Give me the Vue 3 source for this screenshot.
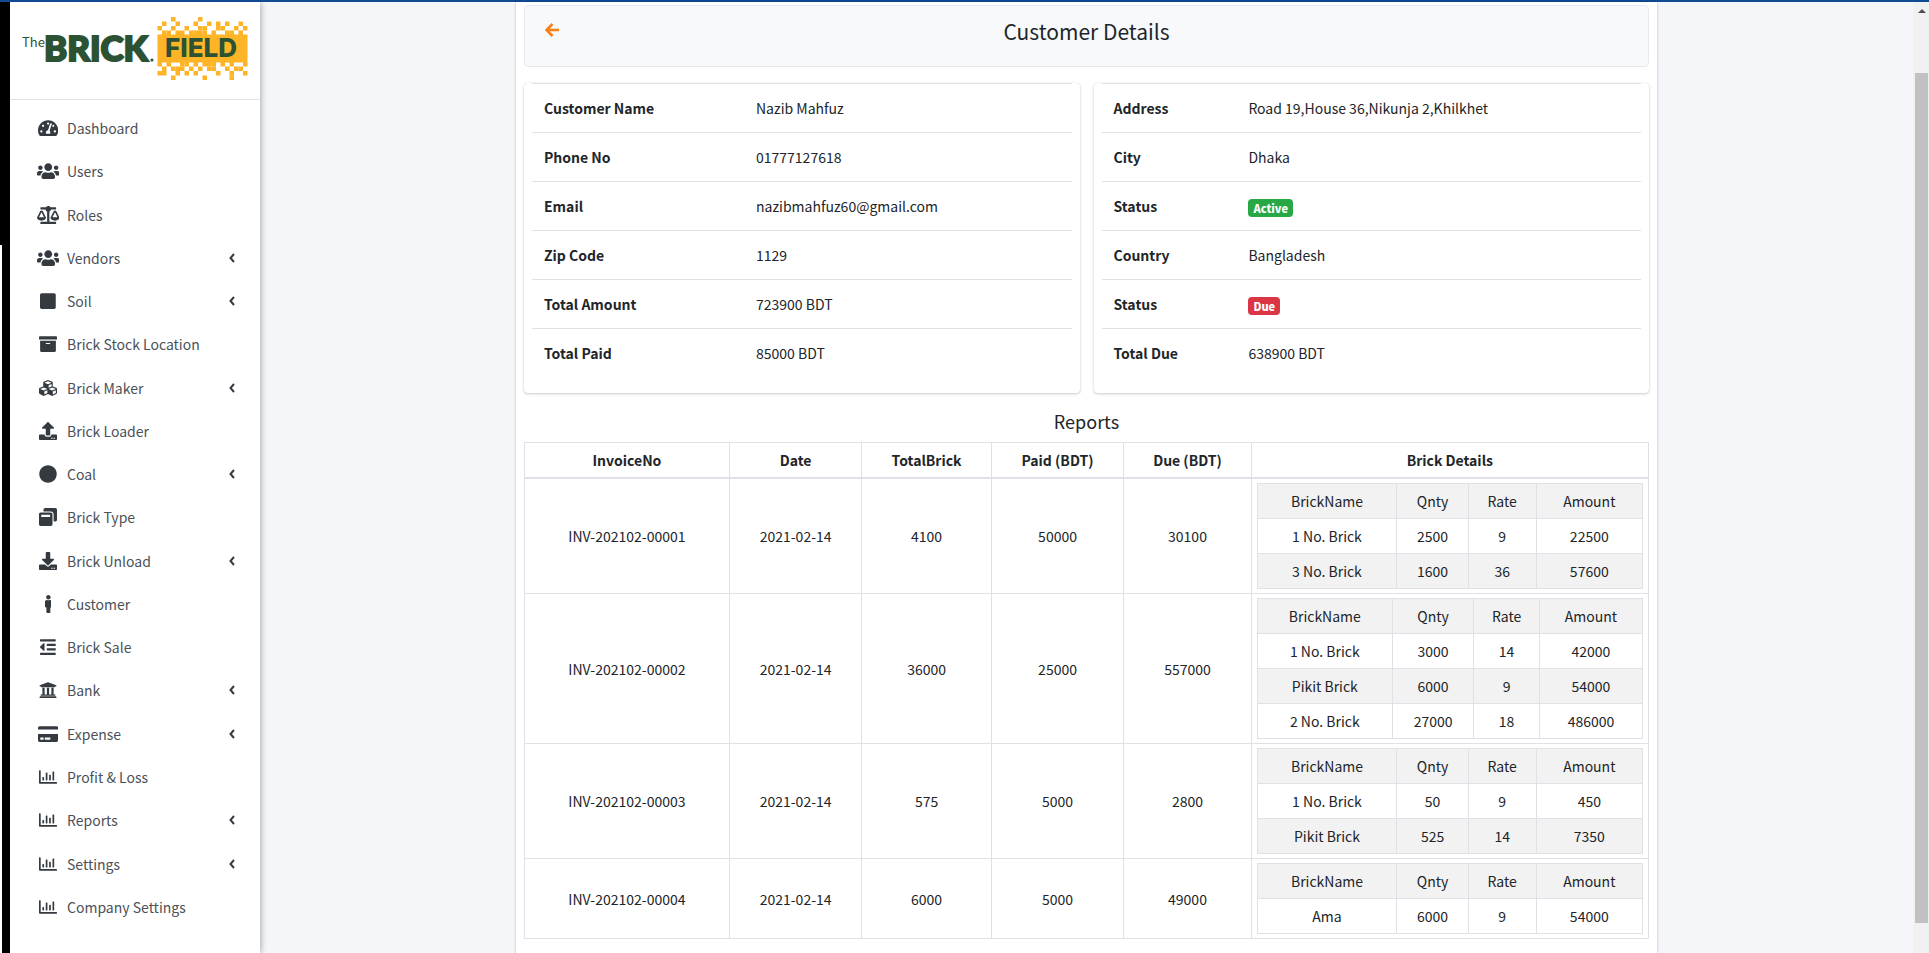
<script setup>
const icons = {
  gauge: { w: 576, d: 'M288 32C128.94 32 0 160.94 0 320c0 52.8 14.25 102.26 39.06 144.8 5.61 9.62 16.3 15.2 27.44 15.2h443c11.14 0 21.83-5.58 27.44-15.2C561.75 422.26 576 372.8 576 320c0-159.06-128.94-288-288-288zm0 64c14.71 0 26.58 10.13 30.32 23.65-1.11 2.26-2.64 4.23-3.45 6.67l-9.22 27.67c-5.13 3.49-10.97 6.01-17.64 6.01-17.67 0-32-14.33-32-32S270.33 96 288 96zM96 384c-17.67 0-32-14.33-32-32s14.33-32 32-32 32 14.33 32 32-14.33 32-32 32zm48-160c-17.67 0-32-14.33-32-32s14.33-32 32-32 32 14.33 32 32-14.33 32-32 32zm246.77-72.41l-61.33 184C343.13 347.33 352 364.54 352 384c0 11.72-3.38 22.55-8.88 32H232.88c-5.5-9.45-8.88-20.28-8.88-32 0-33.94 26.5-61.43 59.9-63.59l61.34-184.01c4.17-12.56 17.73-19.45 30.36-15.17 12.57 4.19 19.35 17.79 15.17 30.36zm14.66 57.2l15.52-46.55c3.47-1.29 7.13-2.23 11.05-2.23 17.67 0 32 14.33 32 32s-14.33 32-32 32c-11.38-.01-20.89-6.28-26.57-15.22zM480 384c-17.67 0-32-14.33-32-32s14.33-32 32-32 32 14.33 32 32-14.33 32-32 32z' },
  users: { w: 640, d: 'M96 224c35.3 0 64-28.7 64-64s-28.7-64-64-64-64 28.700-64 64 28.700 64 64 64zm448 0c35.300 0 64-28.700 64-64s-28.700-64-64-64-64 28.700-64 64 28.700 64 64 64zm32 32h-64c-17.600 0-33.500 7.100-45.100 18.600 40.300 22.100 68.900 62 75.100 109.400h66c17.700 0 32-14.300 32-32v-32c0-35.300-28.700-64-64-64zm-256 0c61.900 0 112-50.100 112-112S381.900 32 320 32 208 82.100 208 144s50.100 112 112 112zm76.800 32h-8.300c-20.800 10-43.900 16-68.500 16s-47.600-6-68.500-16h-8.300C179.600 288 128 339.600 128 403.200V432c0 26.500 21.500 48 48 48h288c26.500 0 48-21.500 48-48v-28.800c0-63.600-51.600-115.200-115.200-115.200zm-223.700-13.400C161.500 263.100 145.600 256 128 256H64c-35.300 0-64 28.700-64 64v32c0 17.700 14.300 32 32 32h65.900c6.300-47.400 34.900-87.300 75.200-109.400z' },
  scale: { w: 640, d: 'M256 336h-.02c0-16.180 1.340-8.730-85.050-181.510-17.650-35.290-68.190-35.360-85.870 0C-2.060 328.750.020 320.330.020 336H0c0 44.180 57.310 80 128 80s128-35.820 128-80zM128 176l72 144H56l72-144zm511.980 160c0-16.180 1.340-8.730-85.050-181.510-17.650-35.290-68.190-35.360-85.870 0-87.120 174.260-85.040 165.840-85.040 181.510H384c0 44.180 57.310 80 128 80s128-35.820 128-80h-.02zM440 320l72-144 72 144H440zm88 128H352V153.250c23.510-10.290 41.160-31.480 46.390-57.250H528c8.840 0 16-7.160 16-16V48c0-8.840-7.160-16-16-16H383.640C369.040 12.680 346.090 0 320 0s-49.040 12.680-63.640 32H112c-8.840 0-16 7.160-16 16v32c0 8.840 7.160 16 16 16h129.610c5.230 25.760 22.870 46.960 46.390 57.250V448H112c-8.840 0-16 7.160-16 16v32c0 8.840 7.160 16 16 16h416c8.840 0 16-7.160 16-16v-32c0-8.840-7.160-16-16-16z' },
  square: { w: 448, d: 'M400 32H48C21.500 32 0 53.500 0 80v352c0 26.500 21.500 48 48 48h352c26.500 0 48-21.500 48-48V80c0-26.500-21.500-48-48-48z' },
  archive: { w: 512, d: 'M32 448c0 17.700 14.300 32 32 32h384c17.700 0 32-14.300 32-32V160H32v288zm160-212c0-6.600 5.400-12 12-12h104c6.600 0 12 5.400 12 12v8c0 6.600-5.400 12-12 12H204c-6.600 0-12-5.400-12-12v-8zM480 32H32C14.300 32 0 46.300 0 64v48c0 8.800 7.200 16 16 16h480c8.800 0 16-7.200 16-16V64c0-17.700-14.300-32-32-32z' },
  cubes: { w: 512, d: 'M488.600 250.200L392 214V105.500c0-15-9.300-28.400-23.400-33.700l-100-37.500c-8.100-3.100-17.100-3.100-25.300 0l-100 37.500c-14.100 5.300-23.400 18.700-23.400 33.700V214l-96.600 36.200C9.300 255.500 0 268.900 0 283.900V394c0 13.600 7.700 26.100 19.900 32.200l100 50c10.100 5.100 22.100 5.100 32.200 0l103.900-52 103.900 52c10.100 5.100 22.100 5.100 32.200 0l100-50c12.200-6.100 19.900-18.600 19.900-32.200V283.900c0-15-9.300-28.400-23.400-33.700zM358 214.800l-85 31.900v-68.200l85-37v73.300zM154 104.100l102-38.200 102 38.200v.6l-102 41.400-102-41.400v-.6zm84 291.100l-85 42.500v-79.100l85-38.800v75.400zm0-112l-102 41.400-102-41.400v-.6l102-38.200 102 38.200v.6zm240 112l-85 42.500v-79.100l85-38.800v75.400zm0-112l-102 41.400-102-41.400v-.6l102-38.200 102 38.200v.6z' },
  upload: { w: 512, d: 'M296 384h-80c-13.300 0-24-10.700-24-24V192h-87.700c-17.800 0-26.700-21.500-14.100-34.100L242.300 5.700c7.500-7.500 19.800-7.500 27.300 0l152.200 152.200c12.600 12.600 3.700 34.100-14.100 34.100H320v168c0 13.300-10.700 24-24 24zm216-8v112c0 13.300-10.700 24-24 24H24c-13.300 0-24-10.700-24-24V376c0-13.300 10.700-24 24-24h136v8c0 30.900 25.100 56 56 56h80c30.900 0 56-25.100 56-56v-8h136c13.300 0 24 10.700 24 24zm-124 88c0-11-9-20-20-20s-20 9-20 20 9 20 20 20 20-9 20-20zm64 0c0-11-9-20-20-20s-20 9-20 20 9 20 20 20 20-9 20-20z' },
  circle: { w: 512, d: 'M256 8C119 8 8 119 8 256s111 248 248 248 248-111 248-248S393 8 256 8z' },
  windows: { w: 512, d: 'M512 48v288c0 26.500-21.500 48-48 48h-48V176c0-44.100-35.900-80-80-80H128V48c0-26.500 21.500-48 48-48h288c26.500 0 48 21.500 48 48zM384 176v288c0 26.500-21.500 48-48 48H48c-26.500 0-48-21.500-48-48V176c0-26.500 21.500-48 48-48h288c26.500 0 48 21.500 48 48zm-68 28c0-6.600-5.400-12-12-12H76c-6.600 0-12 5.400-12 12v52h252v-52z' },
  download: { w: 512, d: 'M216 0h80c13.300 0 24 10.700 24 24v168h87.700c17.800 0 26.700 21.500 14.100 34.100L269.700 378.300c-7.500 7.500-19.800 7.500-27.300 0L90.100 226.100c-12.600-12.600-3.700-34.100 14.100-34.100H192V24c0-13.300 10.700-24 24-24zm296 376v112c0 13.300-10.700 24-24 24H24c-13.300 0-24-10.700-24-24V376c0-13.300 10.700-24 24-24h146.700l49 49c20.100 20.100 52.500 20.100 72.600 0l49-49H488c13.300 0 24 10.700 24 24zm-124 88c0-11-9-20-20-20s-20 9-20 20 9 20 20 20 20-9 20-20zm64 0c0-11-9-20-20-20s-20 9-20 20 9 20 20 20 20-9 20-20z' },
  person: { w: 192, d: 'M96 0c35.346 0 64 28.654 64 64s-28.654 64-64 64-64-28.654-64-64S60.654 0 96 0m48 144h-11.360c-22.711 10.443-49.590 10.894-73.280 0H48c-26.510 0-48 21.490-48 48v136c0 13.255 10.745 24 24 24h16v136c0 13.255 10.745 24 24 24h64c13.255 0 24-10.745 24-24V352h16c13.255 0 24-10.745 24-24V192c0-26.510-21.490-48-48-48z' },
  outdent: { w: 448, d: 'M100.690 363.290c10 10 27.310 2.930 27.310-11.310V160c0-14.320-17.330-21.310-27.310-11.310l-96 96c-6.250 6.250-6.250 16.380 0 22.630zM432 416H16c-8.840 0-16 7.160-16 16v32c0 8.840 7.160 16 16 16h416c8.840 0 16-7.160 16-16v-32c0-8.840-7.160-16-16-16zm3.170-128H204.830A12.820 12.820 0 0 0 192 300.830v38.340A12.820 12.820 0 0 0 204.830 352h230.340A12.820 12.820 0 0 0 448 339.170v-38.340A12.820 12.820 0 0 0 435.170 288zm0-128H204.830A12.820 12.820 0 0 0 192 172.830v38.340A12.820 12.820 0 0 0 204.830 224h230.340A12.820 12.820 0 0 0 448 211.170v-38.340A12.820 12.820 0 0 0 435.170 160zM432 32H16C7.160 32 0 39.160 0 48v32c0 8.840 7.160 16 16 16h416c8.840 0 16-7.160 16-16V48c0-8.840-7.160-16-16-16z' },
  bank: { w: 512, d: 'M496 128v16a8 8 0 0 1-8 8h-24v12c0 6.627-5.373 12-12 12H60c-6.627 0-12-5.373-12-12v-12H24a8 8 0 0 1-8-8v-16a8 8 0 0 1 4.941-7.392l232-88a7.996 7.996 0 0 1 6.118 0l232 88A8 8 0 0 1 496 128zm-24 304H40c-13.255 0-24 10.745-24 24v16a8 8 0 0 0 8 8h464a8 8 0 0 0 8-8v-16c0-13.255-10.745-24-24-24zM96 192v192H60c-6.627 0-12 5.373-12 12v20h416v-20c0-6.627-5.373-12-12-12h-36V192h-64v192h-64V192h-64v192h-64V192H96z' },
  card: { w: 576, d: 'M0 432c0 26.500 21.500 48 48 48h480c26.500 0 48-21.500 48-48V256H0v176zm192-68c0-6.600 5.400-12 12-12h136c6.600 0 12 5.400 12 12v40c0 6.600-5.400 12-12 12H204c-6.600 0-12-5.400-12-12v-40zm-128 0c0-6.600 5.400-12 12-12h72c6.600 0 12 5.400 12 12v40c0 6.600-5.400 12-12 12H76c-6.600 0-12-5.400-12-12v-40zM576 80v48H0V80c0-26.500 21.500-48 48-48h480c26.500 0 48 21.500 48 48z' },
  chart: { w: 512, d: 'M396.800 352h22.400c6.400 0 12.800-6.400 12.800-12.800V108.800c0-6.400-6.400-12.800-12.800-12.800h-22.400c-6.400 0-12.800 6.400-12.800 12.800v230.400c0 6.400 6.400 12.800 12.800 12.800zm-192 0h22.400c6.400 0 12.800-6.400 12.800-12.800V140.800c0-6.400-6.400-12.800-12.800-12.800h-22.400c-6.400 0-12.800 6.400-12.800 12.800v198.400c0 6.400 6.400 12.800 12.800 12.800zm96 0h22.400c6.400 0 12.800-6.400 12.800-12.800V204.800c0-6.400-6.400-12.800-12.800-12.800h-22.400c-6.400 0-12.800 6.400-12.800 12.800v134.400c0 6.400 6.400 12.800 12.800 12.800zM496 400H48V80c0-8.840-7.160-16-16-16H16C7.160 64 0 71.160 0 80v336c0 17.670 14.330 32 32 32h464c8.840 0 16-7.160 16-16v-16c0-8.840-7.160-16-16-16zm-387.200-48h22.400c6.400 0 12.800-6.400 12.800-12.800v-70.400c0-6.400-6.400-12.800-12.800-12.800h-22.400c-6.400 0-12.800 6.400-12.800 12.800v70.400c0 6.400 6.400 12.800 12.800 12.800z' },
}

const menu = [
  { label: 'Dashboard', icon: 'gauge' },
  { label: 'Users', icon: 'users' },
  { label: 'Roles', icon: 'scale' },
  { label: 'Vendors', icon: 'users', sub: true },
  { label: 'Soil', icon: 'square', sub: true },
  { label: 'Brick Stock Location', icon: 'archive' },
  { label: 'Brick Maker', icon: 'cubes', sub: true },
  { label: 'Brick Loader', icon: 'upload' },
  { label: 'Coal', icon: 'circle', sub: true },
  { label: 'Brick Type', icon: 'windows' },
  { label: 'Brick Unload', icon: 'download', sub: true },
  { label: 'Customer', icon: 'person' },
  { label: 'Brick Sale', icon: 'outdent' },
  { label: 'Bank', icon: 'bank', sub: true },
  { label: 'Expense', icon: 'card', sub: true },
  { label: 'Profit & Loss', icon: 'chart' },
  { label: 'Reports', icon: 'chart', sub: true },
  { label: 'Settings', icon: 'chart', sub: true },
  { label: 'Company Settings', icon: 'chart' },
]

const contact = [
  ['Customer Name', 'Nazib Mahfuz'],
  ['Phone No', '01777127618'],
  ['Email', 'nazibmahfuz60@gmail.com'],
  ['Zip Code', '1129'],
  ['Total Amount', '723900 BDT'],
  ['Total Paid', '85000 BDT'],
]

const account = [
  { label: 'Address', value: 'Road 19,House 36,Nikunja 2,Khilkhet' },
  { label: 'City', value: 'Dhaka' },
  { label: 'Status', value: 'Active', badge: 'success' },
  { label: 'Country', value: 'Bangladesh' },
  { label: 'Status', value: 'Due', badge: 'danger' },
  { label: 'Total Due', value: '638900 BDT' },
]

const invoices = [
  { no: 'INV-202102-00001', date: '2021-02-14', total: 4100, paid: 50000, due: 30100,
    bricks: [['1 No. Brick', 2500, 9, 22500], ['3 No. Brick', 1600, 36, 57600]] },
  { no: 'INV-202102-00002', date: '2021-02-14', total: 36000, paid: 25000, due: 557000,
    bricks: [['1 No. Brick', 3000, 14, 42000], ['Pikit Brick', 6000, 9, 54000], ['2 No. Brick', 27000, 18, 486000]] },
  { no: 'INV-202102-00003', date: '2021-02-14', total: 575, paid: 5000, due: 2800,
    bricks: [['1 No. Brick', 50, 9, 450], ['Pikit Brick', 525, 14, 7350]] },
  { no: 'INV-202102-00004', date: '2021-02-14', total: 6000, paid: 5000, due: 49000,
    bricks: [['Ama', 6000, 9, 54000]] },
]

// Filled cells of the logo's ragged edges, one string per row.
const topCells = [
  '...#.....#..........',
  '.#..#...#..#.#.#..#.',
  '#..#..#..##..##..#.#',
  '.##.##.####.#..##.#.',
]
const bottomCells = [
  '#.#..##.#.###.#.#..#',
  '.#.###.#.#.##..#.##.',
  '##..#.#.#....#..#..#',
  '...#......#.....#...',
]
const toRects = (rows, top) =>
  rows.flatMap((row, r) => [...row].flatMap((c, i) => (c === '#' ? [{ x: i * 9, y: top + r * 9 }] : [])))
const pixels = [...toRects(topCells, 0), ...toRects(bottomCells, 90)]
</script>

<template>
  <div class="page">
    <div class="strip"></div>

    <aside class="sidebar">
      <a class="brand" href="#" aria-label="The Brick Field">
        <svg class="logo" viewBox="0 0 226 64" role="img">
          <g transform="translate(135.500 0) scale(.5)" fill="#fdb426">
            <rect x="0" y="35" width="180" height="56" />
            <rect v-for="(p, i) in pixels" :key="i" :x="p.x" :y="p.y" width="9" height="9" />
          </g>
          <text class="logo-the" x="0" y="30">The</text>
          <text class="logo-brick" x="22" y="44">BRICK</text>
          <circle cx="130" cy="43" r="1.500" fill="#2c5234" />
          <text class="logo-field" x="143" y="40">FIELD</text>
        </svg>
      </a>
      <nav class="nav">
        <ul>
          <li v-for="item in menu" :key="item.label">
            <a href="#" class="nav-link">
              <span class="nav-icon">
                <svg :viewBox="`0 0 ${icons[item.icon].w} 512`"><path :d="icons[item.icon].d" fill-rule="evenodd" /></svg>
              </span>
              <span class="nav-text">{{ item.label }}</span>
              <svg v-if="item.sub" class="chevron" viewBox="0 0 6 10"><path d="M5 1 1.500 5 5 9" /></svg>
            </a>
          </li>
        </ul>
      </nav>
    </aside>

    <main class="content">
      <section class="panel">
        <header class="head">
          <button class="back" type="button" aria-label="Back">
            <svg viewBox="0 0 14 14"><path d="M14 7H2M7.500 1 1.500 7l6 6" /></svg>
          </button>
          <h1>Customer Details</h1>
        </header>

        <div class="cards">
          <div class="card">
            <table class="info wide">
              <tbody>
                <tr v-for="[label, value] in contact" :key="label">
                  <th scope="row">{{ label }}</th>
                  <td>{{ value }}</td>
                </tr>
              </tbody>
            </table>
          </div>
          <div class="card">
            <table class="info">
              <tbody>
                <tr v-for="(row, i) in account" :key="i">
                  <th scope="row">{{ row.label }}</th>
                  <td>
                    <span v-if="row.badge" class="badge" :class="row.badge">{{ row.value }}</span>
                    <template v-else>{{ row.value }}</template>
                  </td>
                </tr>
              </tbody>
            </table>
          </div>
        </div>

        <h2>Reports</h2>
        <table class="grid">
          <thead>
            <tr>
              <th>InvoiceNo</th>
              <th>Date</th>
              <th>TotalBrick</th>
              <th>Paid (BDT)</th>
              <th>Due (BDT)</th>
              <th>Brick Details</th>
            </tr>
          </thead>
          <tbody>
            <tr v-for="inv in invoices" :key="inv.no">
              <td>{{ inv.no }}</td>
              <td>{{ inv.date }}</td>
              <td>{{ inv.total }}</td>
              <td>{{ inv.paid }}</td>
              <td>{{ inv.due }}</td>
              <td class="nest">
                <table class="grid striped">
                  <tbody>
                    <tr>
                      <td>BrickName</td>
                      <td>Qnty</td>
                      <td>Rate</td>
                      <td>Amount</td>
                    </tr>
                    <tr v-for="brick in inv.bricks" :key="brick[0]">
                      <td v-for="(cell, c) in brick" :key="c">{{ cell }}</td>
                    </tr>
                  </tbody>
                </table>
              </td>
            </tr>
          </tbody>
        </table>
      </section>
    </main>

    <div class="scrollbar" aria-hidden="true">
      <svg viewBox="0 0 8 4"><path d="M0 4 4 0l4 4z" /></svg>
      <div class="thumb"></div>
    </div>
  </div>
</template>

<style>
body {
  margin: 0;
  background: #f4f6f9;
}
</style>

<style scoped>
* {
  box-sizing: border-box;
}

.page {
  display: flex;
  min-height: 100vh;
  border-top: 2px solid #0f4a92;
  background: #f4f6f9;
  color: #212529;
  font: 14px/24px "Noto Sans CJK SC", "Noto Sans", sans-serif;
}

.strip {
  width: 10px;
  background: linear-gradient(#fff, #fff) left 243px / 2px 100% no-repeat #000;
}

/* Sidebar */
.sidebar {
  display: flex;
  flex-direction: column;
  width: 250px;
  background: #fff;
  box-shadow: 0 0 7px rgba(0, 0, 0, .4);
  clip-path: inset(0 -12px 0 0);
}

.brand {
  display: block;
  height: 98px;
  padding: 15px 12px;
  border-bottom: 1px solid #dee2e6;
}

.logo {
  display: block;
  width: 100%;
}

.logo text {
  fill: #2c5234;
}

.logo-the {
  font: 400 13px "Noto Sans CJK SC", sans-serif;
}

.logo-brick {
  font: 900 35px Lato, sans-serif;
  stroke: #2c5234;
  stroke-width: 2px;
}

.logo-field {
  font: 800 26px Inter, sans-serif;
}

.nav {
  display: flex;
  flex: 1;
  padding: 8px 8px 26px;
}

.nav ul {
  display: flex;
  flex: 1;
  flex-direction: column;
  justify-content: space-between;
  margin: 0;
  padding: 0;
  list-style: none;
}

.nav-link {
  display: flex;
  align-items: center;
  height: 40px;
  padding: 0 17px 0 16px;
  color: #4b5157;
  text-decoration: none;
}

.nav-icon {
  display: flex;
  justify-content: center;
  width: 28px;
  margin-right: 5px;
}

.nav-icon svg {
  height: 18px;
  fill: #343a40;
}

.nav-text {
  flex: 1;
}

.chevron {
  width: 6px;
  height: 10px;
  fill: none;
  stroke: #343a40;
  stroke-width: 2;
}

/* Content */
.content {
  flex: 1;
}

.panel {
  max-width: 1141px;
  min-height: 100%;
  margin: 0 auto;
  padding: 3px 8px 12px;
  background: #fff;
  box-shadow: 0 0 1px rgba(0, 0, 0, .125), 0 1px 3px rgba(0, 0, 0, .2);
}

.head {
  display: flex;
  align-items: flex-start;
  height: 62px;
  padding: 11px 20px;
  border: 1px solid #e6eaee;
  border-radius: 4px;
  background: #f8f9fb;
}

.head h1 {
  flex: 1;
  margin: 0;
  padding-right: 14px;
  text-align: center;
  font-size: 21px;
  font-weight: 400;
  line-height: 28px;
}

.back {
  width: 14px;
  height: 26px;
  padding: 0;
  border: 0;
  background: none;
  line-height: 0;
}

.back svg {
  width: 14px;
  height: 14px;
  fill: none;
  stroke: #fd7e14;
  stroke-width: 2.500;
}

.cards {
  display: grid;
  grid-template-columns: 1fr 1fr;
  gap: 14px;
  margin-top: 16px;
}

.card {
  padding: 0 8px 16px;
  border-radius: 4px;
  box-shadow: 0 0 1px rgba(0, 0, 0, .125), 0 1px 3px rgba(0, 0, 0, .2);
}

table {
  width: 100%;
  border-collapse: collapse;
}

.info {
  border-collapse: separate;
  border-spacing: 0;
}

.info th,
.info td {
  padding: 12px;
  border-top: 1px solid #dee2e6;
  text-align: left;
}

.info th {
  width: 25%;
}

.info.wide th {
  width: 212px;
}

.badge {
  display: inline-block;
  height: 18px;
  padding: 0 5px;
  border-radius: 4px;
  color: #fff;
  font-size: 11px;
  font-weight: 900;
  line-height: 18px;
}

.info td:has(.badge) {
  padding: 12px 12px 10px;
}

.success {
  background: #28a745;
}

.danger {
  background: #dc3545;
}

h2 {
  margin: 16px 0 9px;
  text-align: center;
  font-size: 18px;
  font-weight: 400;
  line-height: 24px;
}

.grid th,
.grid td {
  padding: 5px;
  border: 1px solid #dee2e6;
  text-align: center;
}

.grid thead th {
  border-bottom-width: 2px;
}

.grid .nest {
  padding: 4px 5px;
}

.striped tr:nth-child(odd) {
  background: #f2f2f2;
}

/* Window scrollbar */
.scrollbar {
  display: flex;
  flex-direction: column;
  align-items: center;
  width: 16px;
  padding: 7px 1px 30px 2px;
  background: #f1f1f1;
}

.scrollbar svg {
  width: 8px;
  height: 4px;
  fill: #505050;
}

.thumb {
  flex: 1;
  align-self: stretch;
  margin-top: 60px;
  background: #c1c1c1;
}
</style>
